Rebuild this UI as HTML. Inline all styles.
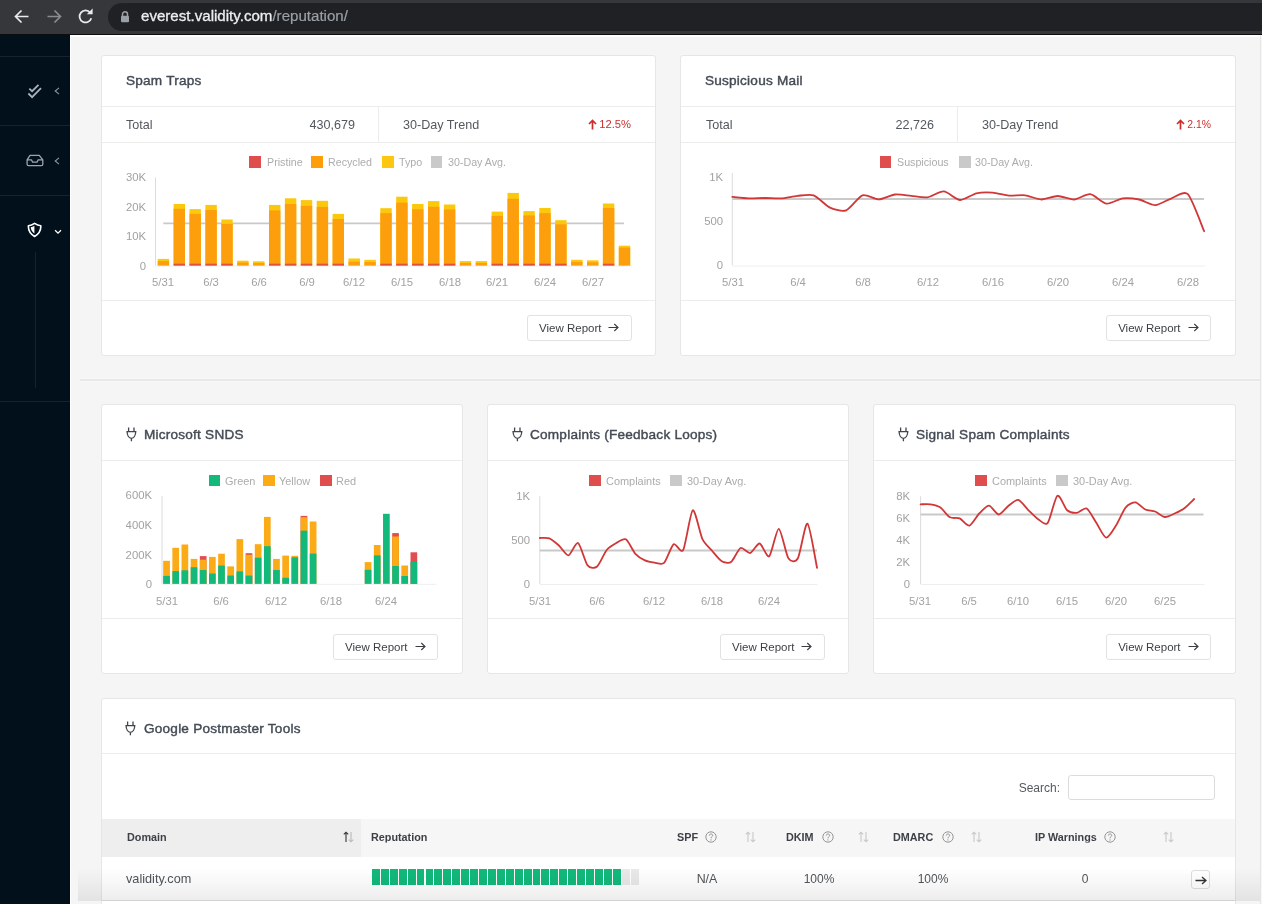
<!DOCTYPE html><html><head><meta charset="utf-8"><style>
html,body{margin:0;padding:0;}
body{width:1262px;height:904px;overflow:hidden;position:relative;background:#f5f5f5;font-family:"Liberation Sans", sans-serif;}
.abs{position:absolute;}
.t{position:absolute;white-space:nowrap;line-height:1;transform:translateY(-50%);will-change:transform;}
.t.e{transform:translate(-100%,-50%);}
.t.c{transform:translate(-50%,-50%);}
.card{position:absolute;background:#fff;border:1px solid #e6e6e6;border-radius:3px;box-sizing:border-box;}
.btn{position:absolute;will-change:transform;box-sizing:border-box;border:1px solid #e2e2e2;border-radius:3px;background:#fff;display:flex;align-items:center;justify-content:center;font-size:11.5px;color:#3b3f45;}
</style></head><body>
<div class="abs" style="left:0;top:0;width:1262px;height:34px;background:#36373b"></div>
<div class="abs" style="left:0;top:34px;width:1262px;height:1px;background:#0d0d0e"></div>
<div class="abs" style="left:108px;top:3px;width:1200px;height:27.5px;background:#202124;border-radius:14px"></div>
<svg class="abs" style="left:14px;top:9px" width="16" height="15" viewBox="0 0 16 15"><path d="M14.5 7.5H2M7.5 1.5L1.5 7.5L7.5 13.5" fill="none" stroke="#e8eaed" stroke-width="1.7"/></svg>
<svg class="abs" style="left:46px;top:9px" width="16" height="15" viewBox="0 0 16 15"><path d="M1.5 7.5H14M8.5 1.5L14.5 7.5L8.5 13.5" fill="none" stroke="#8b8c8f" stroke-width="1.7"/></svg>
<svg class="abs" style="left:77px;top:8px" width="18" height="17" viewBox="0 0 18 17"><path d="M14.3 10.2A6 6 0 1 1 13.2 4.6" fill="none" stroke="#e8eaed" stroke-width="1.8"/><path d="M9.8 6.2H15.6V0.6Z" fill="#e8eaed"/></svg>
<svg class="abs" style="left:120px;top:10px" width="10" height="13" viewBox="0 0 10 13"><path d="M2.5 6V4.2A2.5 2.5 0 0 1 7.5 4.2V6" fill="none" stroke="#9aa0a6" stroke-width="1.5"/><rect x="1" y="5.8" width="8" height="6.4" rx="1" fill="#9aa0a6"/></svg>
<div class="t" style="left:141.2px;top:15.9px;font-size:15.1px;color:#e8eaed;font-weight:400;"><span style="color:#eceef0;-webkit-text-stroke:0.3px #eceef0">everest.validity.com</span><span style="color:#9aa0a6;-webkit-text-stroke:0.2px #9aa0a6">/reputation/</span></div>
<div class="abs" style="left:0;top:35px;width:69.7px;height:869px;background:#02101b"></div>
<div class="abs" style="left:0px;top:55.5px;width:69.7px;height:1px;background:#17222d"></div>
<div class="abs" style="left:0px;top:125px;width:69.7px;height:1px;background:#17222d"></div>
<div class="abs" style="left:0px;top:194.5px;width:69.7px;height:1px;background:#17222d"></div>
<div class="abs" style="left:0px;top:401px;width:69.7px;height:1px;background:#17222d"></div>
<div class="abs" style="left:34.5px;top:252px;width:1px;height:136px;background:#17222d"></div>
<div class="abs" style="left:69.7px;top:35px;width:1.6px;height:869px;background:#ffffff"></div>
<div class="abs" style="left:69.7px;top:35px;width:1192.3px;height:1.6px;background:#ffffff"></div>
<svg class="abs" style="left:26px;top:83px" width="17" height="16" viewBox="0 0 17 16"><path d="M3.3 5.7L6.1 8.2L12.5 1.8M2.4 10.5L6.1 14.2L15 5.2" fill="none" stroke="#a9b2bb" stroke-width="1.8"/></svg>
<svg class="abs" style="left:54px;top:87px" width="6" height="8" viewBox="0 0 6 8"><path d="M5 0.8L1.2 4L5 7.2" fill="none" stroke="#8f969e" stroke-width="1.1"/></svg>
<svg class="abs" style="left:26px;top:154px" width="18" height="13" viewBox="0 0 18 13"><path d="M1.1 5.8L4 1.3H13.3L16.8 5.8V10.2Q16.8 11.7 15.3 11.7H2.6Q1.1 11.7 1.1 10.2Z M1.1 5.8H5.4L6.6 8.1H11L12.2 5.8H16.8" fill="none" stroke="#9ba5ae" stroke-width="1.3" stroke-linejoin="round"/></svg>
<svg class="abs" style="left:54px;top:156.5px" width="6" height="8" viewBox="0 0 6 8"><path d="M5 0.8L1.2 4L5 7.2" fill="none" stroke="#8f969e" stroke-width="1.1"/></svg>
<svg class="abs" style="left:27px;top:222px" width="15" height="16" viewBox="0 0 15 16"><path d="M7.6 1.3Q4.5 3.5 1.4 3.7Q1 10.5 7.6 14.5Q14.2 10.5 13.8 3.7Q10.7 3.5 7.6 1.3Z" fill="none" stroke="#ffffff" stroke-width="1.6" stroke-linejoin="round"/><path d="M7.4 3.7V11.6Q4.1 9.3 3.7 5.3Q5.8 4.9 7.4 3.7Z" fill="#ffffff"/></svg>
<svg class="abs" style="left:54px;top:229px" width="8" height="6" viewBox="0 0 8 6"><path d="M1.1 1.2L4 4.1L7 1.2" fill="none" stroke="#ffffff" stroke-width="1.3"/></svg>
<div class="abs" style="left:1260px;top:35px;width:1px;height:869px;background:#e6e6e6"></div>
<div class="abs" style="left:1261px;top:36px;width:1px;height:868px;background:#f7f7f7"></div>
<div class="card" style="left:101px;top:55px;width:555px;height:301px"></div>
<div class="card" style="left:680px;top:55px;width:556px;height:301px"></div>
<div class="abs" style="left:80px;top:377.6px;width:1180px;height:1px;background:#f9f9f9"></div>
<div class="abs" style="left:80px;top:379.1px;width:1180px;height:1.6px;background:#e8e8e8"></div>
<div class="abs" style="left:80px;top:380.7px;width:1180px;height:1.2px;background:#f8f8f8"></div>
<div class="card" style="left:101px;top:404px;width:362px;height:270px"></div>
<div class="card" style="left:487px;top:404px;width:362px;height:270px"></div>
<div class="card" style="left:873px;top:404px;width:363px;height:270px"></div>
<div class="card" style="left:101px;top:698px;width:1135px;height:230px"></div>
<div class="t" style="left:125.7px;top:81.3px;font-size:13.6px;color:#444b55;font-weight:400;letter-spacing:0.22px;-webkit-text-stroke:0.42px #444b55">Spam Traps</div>
<div class="abs" style="left:102px;top:106px;width:553px;height:1px;background:#ececec"></div>
<div class="abs" style="left:102px;top:142px;width:553px;height:1px;background:#ececec"></div>
<div class="abs" style="left:378px;top:106px;width:1px;height:36px;background:#ececec"></div>
<div class="t" style="left:125.8px;top:125px;font-size:12.6px;color:#53585e;font-weight:400;">Total</div>
<div class="t e" style="left:354.7px;top:125px;font-size:12.6px;color:#53585e;font-weight:400;">430,679</div>
<div class="t" style="left:402.6px;top:125px;font-size:12.6px;color:#53585e;font-weight:400;">30-Day Trend</div>
<div class="t e" style="left:631.2px;top:124.5px;font-size:11.2px;color:#c9302c;font-weight:400;">12.5%</div>
<svg class="abs" style="left:588px;top:119px" width="9" height="11" viewBox="0 0 9 11"><path d="M4.5 10.5V1.6M1 5L4.5 1.4L8 5" fill="none" stroke="#c9302c" stroke-width="1.7"/></svg>
<div class="abs" style="left:249.3px;top:156.45px;width:11.7px;height:11.7px;background:#df4d4d"></div>
<div class="t" style="left:266.6px;top:162.3px;font-size:10.7px;color:#acacac;font-weight:400;">Pristine</div>
<div class="abs" style="left:311px;top:156.45px;width:11.7px;height:11.7px;background:#fd9f0d"></div>
<div class="t" style="left:328px;top:162.3px;font-size:10.7px;color:#acacac;font-weight:400;">Recycled</div>
<div class="abs" style="left:382px;top:156.45px;width:11.7px;height:11.7px;background:#fdc70f"></div>
<div class="t" style="left:398.6px;top:162.3px;font-size:10.7px;color:#acacac;font-weight:400;">Typo</div>
<div class="abs" style="left:430.8px;top:156.45px;width:11.7px;height:11.7px;background:#c9c9c9"></div>
<div class="t" style="left:447.5px;top:162.3px;font-size:10.7px;color:#acacac;font-weight:400;">30-Day Avg.</div>
<div class="t e" style="left:145.5px;top:178.4px;font-size:11.3px;color:#a2a2a2;font-weight:400;">30K</div>
<div class="t e" style="left:145.5px;top:207.8px;font-size:11.3px;color:#a2a2a2;font-weight:400;">20K</div>
<div class="t e" style="left:145.5px;top:237.2px;font-size:11.3px;color:#a2a2a2;font-weight:400;">10K</div>
<div class="t e" style="left:145.5px;top:266.6px;font-size:11.3px;color:#a2a2a2;font-weight:400;">0</div>
<div class="t c" style="left:163.4px;top:283.2px;font-size:11.3px;color:#a2a2a2;font-weight:400;">5/31</div>
<div class="t c" style="left:211.1px;top:283.2px;font-size:11.3px;color:#a2a2a2;font-weight:400;">6/3</div>
<div class="t c" style="left:258.8px;top:283.2px;font-size:11.3px;color:#a2a2a2;font-weight:400;">6/6</div>
<div class="t c" style="left:306.5px;top:283.2px;font-size:11.3px;color:#a2a2a2;font-weight:400;">6/9</div>
<div class="t c" style="left:354.2px;top:283.2px;font-size:11.3px;color:#a2a2a2;font-weight:400;">6/12</div>
<div class="t c" style="left:401.9px;top:283.2px;font-size:11.3px;color:#a2a2a2;font-weight:400;">6/15</div>
<div class="t c" style="left:449.6px;top:283.2px;font-size:11.3px;color:#a2a2a2;font-weight:400;">6/18</div>
<div class="t c" style="left:497.3px;top:283.2px;font-size:11.3px;color:#a2a2a2;font-weight:400;">6/21</div>
<div class="t c" style="left:545px;top:283.2px;font-size:11.3px;color:#a2a2a2;font-weight:400;">6/24</div>
<div class="t c" style="left:592.7px;top:283.2px;font-size:11.3px;color:#a2a2a2;font-weight:400;">6/27</div>
<div class="abs" style="left:102px;top:300px;width:553px;height:1px;background:#ececec"></div>
<div class="btn" style="left:526.5px;top:315.4px;width:104.5px;height:25.9px"><span>View Report</span><svg width="11" height="9" viewBox="0 0 11 9" style="margin-left:7px"><path d="M0.5 4.5H10M6.3 1L10 4.5L6.3 8" fill="none" stroke="#3a3d42" stroke-width="1.15"/></svg></div>
<div class="t" style="left:704.9px;top:81.3px;font-size:13.6px;color:#444b55;font-weight:400;letter-spacing:0.22px;-webkit-text-stroke:0.42px #444b55">Suspicious Mail</div>
<div class="abs" style="left:681px;top:106px;width:554px;height:1px;background:#ececec"></div>
<div class="abs" style="left:681px;top:142px;width:554px;height:1px;background:#ececec"></div>
<div class="abs" style="left:957px;top:106px;width:1px;height:36px;background:#ececec"></div>
<div class="t" style="left:705.6px;top:125px;font-size:12.6px;color:#53585e;font-weight:400;">Total</div>
<div class="t e" style="left:934.1px;top:125px;font-size:12.6px;color:#53585e;font-weight:400;">22,726</div>
<div class="t" style="left:981.6px;top:125px;font-size:12.6px;color:#53585e;font-weight:400;">30-Day Trend</div>
<div class="t e" style="left:1210.9px;top:124.5px;font-size:10.4px;color:#c9302c;font-weight:400;">2.1%</div>
<svg class="abs" style="left:1175.5px;top:119px" width="9" height="11" viewBox="0 0 9 11"><path d="M4.5 10.5V1.6M1 5L4.5 1.4L8 5" fill="none" stroke="#c9302c" stroke-width="1.7"/></svg>
<div class="abs" style="left:879.7px;top:156.45px;width:11.7px;height:11.7px;background:#df4d4d"></div>
<div class="t" style="left:896.6px;top:162.3px;font-size:10.7px;color:#acacac;font-weight:400;">Suspicious</div>
<div class="abs" style="left:959px;top:156.45px;width:11.7px;height:11.7px;background:#c9c9c9"></div>
<div class="t" style="left:975.4px;top:162.3px;font-size:10.7px;color:#acacac;font-weight:400;">30-Day Avg.</div>
<div class="t e" style="left:722.5px;top:178.1px;font-size:11.3px;color:#a2a2a2;font-weight:400;">1K</div>
<div class="t e" style="left:722.5px;top:222.1px;font-size:11.3px;color:#a2a2a2;font-weight:400;">500</div>
<div class="t e" style="left:722.5px;top:266.1px;font-size:11.3px;color:#a2a2a2;font-weight:400;">0</div>
<div class="t c" style="left:732.5px;top:283.2px;font-size:11.3px;color:#a2a2a2;font-weight:400;">5/31</div>
<div class="t c" style="left:797.58px;top:283.2px;font-size:11.3px;color:#a2a2a2;font-weight:400;">6/4</div>
<div class="t c" style="left:862.66px;top:283.2px;font-size:11.3px;color:#a2a2a2;font-weight:400;">6/8</div>
<div class="t c" style="left:927.74px;top:283.2px;font-size:11.3px;color:#a2a2a2;font-weight:400;">6/12</div>
<div class="t c" style="left:992.82px;top:283.2px;font-size:11.3px;color:#a2a2a2;font-weight:400;">6/16</div>
<div class="t c" style="left:1057.9px;top:283.2px;font-size:11.3px;color:#a2a2a2;font-weight:400;">6/20</div>
<div class="t c" style="left:1122.98px;top:283.2px;font-size:11.3px;color:#a2a2a2;font-weight:400;">6/24</div>
<div class="t c" style="left:1188.06px;top:283.2px;font-size:11.3px;color:#a2a2a2;font-weight:400;">6/28</div>
<div class="abs" style="left:681px;top:300px;width:554px;height:1px;background:#ececec"></div>
<div class="btn" style="left:1106.2px;top:315.4px;width:104.7px;height:25.9px"><span>View Report</span><svg width="11" height="9" viewBox="0 0 11 9" style="margin-left:7px"><path d="M0.5 4.5H10M6.3 1L10 4.5L6.3 8" fill="none" stroke="#3a3d42" stroke-width="1.15"/></svg></div>
<svg class="abs" style="left:125.5px;top:426.5px" width="12" height="15" viewBox="0 0 12 15"><path d="M2.6 0.6V4.2M8 0.6V4.2M0.4 4.7H10.4M1.1 4.7C1.1 8.4 3.1 11 5.4 11.3C7.7 11 9.7 8.4 9.7 4.7M5.4 11.3V14.3" fill="none" stroke="#3f454d" stroke-width="1.3"/></svg>
<div class="t" style="left:144.3px;top:435.2px;font-size:13.6px;color:#444b55;font-weight:400;letter-spacing:0.22px;-webkit-text-stroke:0.42px #444b55">Microsoft SNDS</div>
<div class="abs" style="left:102px;top:460px;width:360px;height:1px;background:#ececec"></div>
<div class="abs" style="left:208.5px;top:474.7px;width:11.8px;height:11.8px;background:#12b97b"></div>
<div class="t" style="left:224.6px;top:480.5px;font-size:10.95px;color:#acacac;font-weight:400;">Green</div>
<div class="abs" style="left:263.3px;top:474.7px;width:11.8px;height:11.8px;background:#fbab16"></div>
<div class="t" style="left:279.4px;top:480.5px;font-size:10.95px;color:#acacac;font-weight:400;">Yellow</div>
<div class="abs" style="left:319.9px;top:474.7px;width:11.8px;height:11.8px;background:#df4d4d"></div>
<div class="t" style="left:336.3px;top:480.5px;font-size:10.95px;color:#acacac;font-weight:400;">Red</div>
<div class="t e" style="left:151.7px;top:496.4px;font-size:11.3px;color:#a2a2a2;font-weight:400;">600K</div>
<div class="t e" style="left:151.7px;top:526.2px;font-size:11.3px;color:#a2a2a2;font-weight:400;">400K</div>
<div class="t e" style="left:151.7px;top:555.8px;font-size:11.3px;color:#a2a2a2;font-weight:400;">200K</div>
<div class="t e" style="left:151.7px;top:585.2px;font-size:11.3px;color:#a2a2a2;font-weight:400;">0</div>
<div class="t c" style="left:166.5px;top:601.6px;font-size:11.3px;color:#a2a2a2;font-weight:400;">5/31</div>
<div class="t c" style="left:221.46px;top:601.6px;font-size:11.3px;color:#a2a2a2;font-weight:400;">6/6</div>
<div class="t c" style="left:276.42px;top:601.6px;font-size:11.3px;color:#a2a2a2;font-weight:400;">6/12</div>
<div class="t c" style="left:331.38px;top:601.6px;font-size:11.3px;color:#a2a2a2;font-weight:400;">6/18</div>
<div class="t c" style="left:386.34px;top:601.6px;font-size:11.3px;color:#a2a2a2;font-weight:400;">6/24</div>
<div class="abs" style="left:102px;top:618px;width:360px;height:1px;background:#ececec"></div>
<div class="btn" style="left:333.3px;top:633.6px;width:104.6px;height:25.8px"><span>View Report</span><svg width="11" height="9" viewBox="0 0 11 9" style="margin-left:7px"><path d="M0.5 4.5H10M6.3 1L10 4.5L6.3 8" fill="none" stroke="#3a3d42" stroke-width="1.15"/></svg></div>
<svg class="abs" style="left:511.8px;top:426.5px" width="12" height="15" viewBox="0 0 12 15"><path d="M2.6 0.6V4.2M8 0.6V4.2M0.4 4.7H10.4M1.1 4.7C1.1 8.4 3.1 11 5.4 11.3C7.7 11 9.7 8.4 9.7 4.7M5.4 11.3V14.3" fill="none" stroke="#3f454d" stroke-width="1.3"/></svg>
<div class="t" style="left:530.2px;top:435.2px;font-size:13.6px;color:#444b55;font-weight:400;letter-spacing:0.22px;-webkit-text-stroke:0.42px #444b55">Complaints (Feedback Loops)</div>
<div class="abs" style="left:488px;top:460px;width:360px;height:1px;background:#ececec"></div>
<div class="abs" style="left:589.1px;top:474.7px;width:11.8px;height:11.8px;background:#df4d4d"></div>
<div class="t" style="left:605.7px;top:480.5px;font-size:10.95px;color:#acacac;font-weight:400;">Complaints</div>
<div class="abs" style="left:670px;top:474.7px;width:11.8px;height:11.8px;background:#c9c9c9"></div>
<div class="t" style="left:686.5px;top:480.5px;font-size:10.95px;color:#acacac;font-weight:400;">30-Day Avg.</div>
<div class="t e" style="left:529.9px;top:496.6px;font-size:11.3px;color:#a2a2a2;font-weight:400;">1K</div>
<div class="t e" style="left:529.9px;top:540.8px;font-size:11.3px;color:#a2a2a2;font-weight:400;">500</div>
<div class="t e" style="left:529.9px;top:585px;font-size:11.3px;color:#a2a2a2;font-weight:400;">0</div>
<div class="t c" style="left:539.6px;top:601.6px;font-size:11.3px;color:#a2a2a2;font-weight:400;">5/31</div>
<div class="t c" style="left:597px;top:601.6px;font-size:11.3px;color:#a2a2a2;font-weight:400;">6/6</div>
<div class="t c" style="left:654.4px;top:601.6px;font-size:11.3px;color:#a2a2a2;font-weight:400;">6/12</div>
<div class="t c" style="left:711.8px;top:601.6px;font-size:11.3px;color:#a2a2a2;font-weight:400;">6/18</div>
<div class="t c" style="left:769.2px;top:601.6px;font-size:11.3px;color:#a2a2a2;font-weight:400;">6/24</div>
<div class="abs" style="left:488px;top:618px;width:360px;height:1px;background:#ececec"></div>
<div class="btn" style="left:720px;top:633.6px;width:104.5px;height:25.8px"><span>View Report</span><svg width="11" height="9" viewBox="0 0 11 9" style="margin-left:7px"><path d="M0.5 4.5H10M6.3 1L10 4.5L6.3 8" fill="none" stroke="#3a3d42" stroke-width="1.15"/></svg></div>
<svg class="abs" style="left:897.8px;top:426.5px" width="12" height="15" viewBox="0 0 12 15"><path d="M2.6 0.6V4.2M8 0.6V4.2M0.4 4.7H10.4M1.1 4.7C1.1 8.4 3.1 11 5.4 11.3C7.7 11 9.7 8.4 9.7 4.7M5.4 11.3V14.3" fill="none" stroke="#3f454d" stroke-width="1.3"/></svg>
<div class="t" style="left:916.4px;top:435.2px;font-size:13.6px;color:#444b55;font-weight:400;letter-spacing:0.22px;-webkit-text-stroke:0.42px #444b55">Signal Spam Complaints</div>
<div class="abs" style="left:874px;top:460px;width:361px;height:1px;background:#ececec"></div>
<div class="abs" style="left:975px;top:474.7px;width:11.8px;height:11.8px;background:#df4d4d"></div>
<div class="t" style="left:991.6px;top:480.5px;font-size:10.95px;color:#acacac;font-weight:400;">Complaints</div>
<div class="abs" style="left:1056px;top:474.7px;width:11.8px;height:11.8px;background:#c9c9c9"></div>
<div class="t" style="left:1072.7px;top:480.5px;font-size:10.95px;color:#acacac;font-weight:400;">30-Day Avg.</div>
<div class="t e" style="left:910.4px;top:496.8px;font-size:11.3px;color:#a2a2a2;font-weight:400;">8K</div>
<div class="t e" style="left:910.4px;top:518.9px;font-size:11.3px;color:#a2a2a2;font-weight:400;">6K</div>
<div class="t e" style="left:910.4px;top:540.8px;font-size:11.3px;color:#a2a2a2;font-weight:400;">4K</div>
<div class="t e" style="left:910.4px;top:562.8px;font-size:11.3px;color:#a2a2a2;font-weight:400;">2K</div>
<div class="t e" style="left:910.4px;top:585px;font-size:11.3px;color:#a2a2a2;font-weight:400;">0</div>
<div class="t c" style="left:919.9px;top:601.6px;font-size:11.3px;color:#a2a2a2;font-weight:400;">5/31</div>
<div class="t c" style="left:968.9px;top:601.6px;font-size:11.3px;color:#a2a2a2;font-weight:400;">6/5</div>
<div class="t c" style="left:1017.9px;top:601.6px;font-size:11.3px;color:#a2a2a2;font-weight:400;">6/10</div>
<div class="t c" style="left:1066.9px;top:601.6px;font-size:11.3px;color:#a2a2a2;font-weight:400;">6/15</div>
<div class="t c" style="left:1115.9px;top:601.6px;font-size:11.3px;color:#a2a2a2;font-weight:400;">6/20</div>
<div class="t c" style="left:1164.9px;top:601.6px;font-size:11.3px;color:#a2a2a2;font-weight:400;">6/25</div>
<div class="abs" style="left:874px;top:618px;width:361px;height:1px;background:#ececec"></div>
<div class="btn" style="left:1106.2px;top:633.6px;width:104.7px;height:25.8px"><span>View Report</span><svg width="11" height="9" viewBox="0 0 11 9" style="margin-left:7px"><path d="M0.5 4.5H10M6.3 1L10 4.5L6.3 8" fill="none" stroke="#3a3d42" stroke-width="1.15"/></svg></div>
<svg class="abs" style="left:0;top:0" width="1262" height="904" viewBox="0 0 1262 904"><line x1="155.5" y1="177.5" x2="155.5" y2="265.5" stroke="#dcdcdc" stroke-width="1"/><line x1="155.5" y1="266.0" x2="632" y2="266.0" stroke="#eeeeee" stroke-width="1"/><line x1="163.3" y1="223.4" x2="624" y2="223.4" stroke="#c9c9c9" stroke-width="1.8"/><rect x="157.7" y="258.9" width="11.4" height="6.6" fill="#fbc80b"/><rect x="157.7" y="261.1" width="11.4" height="4.4" fill="#fd9f0d"/><rect x="173.6" y="204" width="11.4" height="61.5" fill="#fbc80b"/><rect x="173.6" y="208.8" width="11.4" height="56.7" fill="#fd9f0d"/><rect x="173.6" y="263.7" width="11.4" height="1.8" fill="#e2503c"/><rect x="189.5" y="209.1" width="11.4" height="56.4" fill="#fbc80b"/><rect x="189.5" y="213.9" width="11.4" height="51.6" fill="#fd9f0d"/><rect x="189.5" y="263.7" width="11.4" height="1.8" fill="#e2503c"/><rect x="205.4" y="204.9" width="11.4" height="60.6" fill="#fbc80b"/><rect x="205.4" y="210" width="11.4" height="55.5" fill="#fd9f0d"/><rect x="205.4" y="263.7" width="11.4" height="1.8" fill="#e2503c"/><rect x="221.3" y="219.5" width="11.4" height="46" fill="#fbc80b"/><rect x="221.3" y="223.9" width="11.4" height="41.6" fill="#fd9f0d"/><rect x="221.3" y="263.7" width="11.4" height="1.8" fill="#e2503c"/><rect x="237.2" y="260.7" width="11.4" height="4.8" fill="#fbc80b"/><rect x="237.2" y="262.6" width="11.4" height="2.9" fill="#fd9f0d"/><rect x="253.1" y="261.3" width="11.4" height="4.2" fill="#fbc80b"/><rect x="253.1" y="263" width="11.4" height="2.5" fill="#fd9f0d"/><rect x="269" y="204.9" width="11.4" height="60.6" fill="#fbc80b"/><rect x="269" y="210.4" width="11.4" height="55.1" fill="#fd9f0d"/><rect x="269" y="263.7" width="11.4" height="1.8" fill="#e2503c"/><rect x="284.9" y="198.3" width="11.4" height="67.2" fill="#fbc80b"/><rect x="284.9" y="204" width="11.4" height="61.5" fill="#fd9f0d"/><rect x="284.9" y="263.7" width="11.4" height="1.8" fill="#e2503c"/><rect x="300.8" y="200.1" width="11.4" height="65.4" fill="#fbc80b"/><rect x="300.8" y="205.9" width="11.4" height="59.6" fill="#fd9f0d"/><rect x="300.8" y="263.7" width="11.4" height="1.8" fill="#e2503c"/><rect x="316.7" y="200.8" width="11.4" height="64.7" fill="#fbc80b"/><rect x="316.7" y="206.9" width="11.4" height="58.6" fill="#fd9f0d"/><rect x="316.7" y="263.7" width="11.4" height="1.8" fill="#e2503c"/><rect x="332.6" y="213.9" width="11.4" height="51.6" fill="#fbc80b"/><rect x="332.6" y="219" width="11.4" height="46.5" fill="#fd9f0d"/><rect x="332.6" y="263.7" width="11.4" height="1.8" fill="#e2503c"/><rect x="348.5" y="258.5" width="11.4" height="7" fill="#fbc80b"/><rect x="348.5" y="261.7" width="11.4" height="3.8" fill="#fd9f0d"/><rect x="364.4" y="259.8" width="11.4" height="5.7" fill="#fbc80b"/><rect x="364.4" y="262" width="11.4" height="3.5" fill="#fd9f0d"/><rect x="380.3" y="208.2" width="11.4" height="57.3" fill="#fbc80b"/><rect x="380.3" y="213.1" width="11.4" height="52.4" fill="#fd9f0d"/><rect x="380.3" y="263.7" width="11.4" height="1.8" fill="#e2503c"/><rect x="396.2" y="196.7" width="11.4" height="68.8" fill="#fbc80b"/><rect x="396.2" y="202.7" width="11.4" height="62.8" fill="#fd9f0d"/><rect x="396.2" y="263.7" width="11.4" height="1.8" fill="#e2503c"/><rect x="412.1" y="204" width="11.4" height="61.5" fill="#fbc80b"/><rect x="412.1" y="209.3" width="11.4" height="56.2" fill="#fd9f0d"/><rect x="412.1" y="263.7" width="11.4" height="1.8" fill="#e2503c"/><rect x="428" y="201.1" width="11.4" height="64.4" fill="#fbc80b"/><rect x="428" y="206.8" width="11.4" height="58.7" fill="#fd9f0d"/><rect x="428" y="263.7" width="11.4" height="1.8" fill="#e2503c"/><rect x="443.9" y="204.5" width="11.4" height="61" fill="#fbc80b"/><rect x="443.9" y="209.4" width="11.4" height="56.1" fill="#fd9f0d"/><rect x="443.9" y="263.7" width="11.4" height="1.8" fill="#e2503c"/><rect x="459.8" y="261.1" width="11.4" height="4.4" fill="#fbc80b"/><rect x="459.8" y="263" width="11.4" height="2.5" fill="#fd9f0d"/><rect x="475.7" y="261.1" width="11.4" height="4.4" fill="#fbc80b"/><rect x="475.7" y="263" width="11.4" height="2.5" fill="#fd9f0d"/><rect x="491.6" y="211.6" width="11.4" height="53.9" fill="#fbc80b"/><rect x="491.6" y="215.9" width="11.4" height="49.6" fill="#fd9f0d"/><rect x="491.6" y="263.7" width="11.4" height="1.8" fill="#e2503c"/><rect x="507.5" y="192.9" width="11.4" height="72.6" fill="#fbc80b"/><rect x="507.5" y="198.8" width="11.4" height="66.7" fill="#fd9f0d"/><rect x="507.5" y="263.7" width="11.4" height="1.8" fill="#e2503c"/><rect x="523.4" y="211.1" width="11.4" height="54.4" fill="#fbc80b"/><rect x="523.4" y="215.4" width="11.4" height="50.1" fill="#fd9f0d"/><rect x="523.4" y="263.7" width="11.4" height="1.8" fill="#e2503c"/><rect x="539.3" y="208" width="11.4" height="57.5" fill="#fbc80b"/><rect x="539.3" y="213.2" width="11.4" height="52.3" fill="#fd9f0d"/><rect x="539.3" y="263.7" width="11.4" height="1.8" fill="#e2503c"/><rect x="555.2" y="220.2" width="11.4" height="45.3" fill="#fbc80b"/><rect x="555.2" y="224.3" width="11.4" height="41.2" fill="#fd9f0d"/><rect x="555.2" y="263.7" width="11.4" height="1.8" fill="#e2503c"/><rect x="571.1" y="259.8" width="11.4" height="5.7" fill="#fbc80b"/><rect x="571.1" y="262" width="11.4" height="3.5" fill="#fd9f0d"/><rect x="587" y="260.3" width="11.4" height="5.2" fill="#fbc80b"/><rect x="587" y="262.3" width="11.4" height="3.2" fill="#fd9f0d"/><rect x="602.9" y="203.5" width="11.4" height="62" fill="#fbc80b"/><rect x="602.9" y="208" width="11.4" height="57.5" fill="#fd9f0d"/><rect x="602.9" y="263.7" width="11.4" height="1.8" fill="#e2503c"/><rect x="618.8" y="245.7" width="11.4" height="19.8" fill="#fbc80b"/><rect x="618.8" y="247.6" width="11.4" height="17.9" fill="#fd9f0d"/><line x1="732.3" y1="173" x2="732.3" y2="265.5" stroke="#dcdcdc" stroke-width="1"/><line x1="732.3" y1="266.0" x2="1205" y2="266.0" stroke="#eeeeee" stroke-width="1"/><line x1="732.3" y1="199" x2="1204" y2="199" stroke="#c9c9c9" stroke-width="1.8"/><path d="M732.3 196.9 C734.33 197.09 744.5 198.26 748.57 198.4 C752.64 198.54 760.77 198 764.84 198 C768.91 198 777.04 198.66 781.11 198.4 C785.18 198.14 793.31 196.29 797.38 195.9 C801.45 195.51 809.58 193.84 813.65 195.3 C817.72 196.76 825.85 205.72 829.92 207.6 C833.99 209.47 842.12 211.84 846.19 210.3 C850.26 208.76 858.39 196.66 862.46 195.3 C866.53 193.94 874.66 199.5 878.73 199.4 C882.8 199.3 890.93 194.94 895 194.5 C899.07 194.06 907.2 195.55 911.27 195.9 C915.34 196.25 923.47 197.86 927.54 197.3 C931.61 196.74 939.74 191.06 943.81 191.4 C947.88 191.74 956.01 199.76 960.08 200 C964.15 200.24 972.28 194.23 976.35 193.3 C980.42 192.38 988.55 192.31 992.62 192.6 C996.69 192.89 1004.82 195.26 1008.89 195.6 C1012.96 195.94 1021.09 194.81 1025.16 195.3 C1029.23 195.79 1037.36 199.41 1041.43 199.5 C1045.5 199.59 1053.63 196 1057.7 196 C1061.77 196 1069.9 199.72 1073.97 199.5 C1078.04 199.28 1086.17 193.69 1090.24 194.2 C1094.31 194.71 1102.44 203.09 1106.51 203.6 C1110.58 204.11 1118.71 198.81 1122.78 198.3 C1126.85 197.79 1134.98 198.64 1139.05 199.5 C1143.12 200.36 1151.25 205.35 1155.32 205.2 C1159.39 205.05 1167.52 199.68 1171.59 198.3 C1175.66 196.93 1183.79 190.09 1187.86 194.2 C1191.93 198.31 1202.1 226.57 1204.13 231.2" fill="none" stroke="#d13737" stroke-width="1.8" stroke-linejoin="round" stroke-linecap="round"/><line x1="162" y1="495.8" x2="162" y2="583.8" stroke="#dcdcdc" stroke-width="1"/><line x1="162" y1="584.3" x2="436.4" y2="584.3" stroke="#eeeeee" stroke-width="1"/><rect x="163.2" y="560.8" width="6.7" height="23" fill="#fbab16"/><rect x="163.2" y="575.9" width="6.7" height="7.9" fill="#12b97b"/><rect x="172.36" y="547.8" width="6.7" height="36" fill="#fbab16"/><rect x="172.36" y="571.1" width="6.7" height="12.7" fill="#12b97b"/><rect x="181.52" y="544.5" width="6.7" height="39.3" fill="#fbab16"/><rect x="181.52" y="570.3" width="6.7" height="13.5" fill="#12b97b"/><rect x="190.68" y="558.9" width="6.7" height="24.9" fill="#fbab16"/><rect x="190.68" y="567.2" width="6.7" height="16.6" fill="#12b97b"/><rect x="199.84" y="556.1" width="6.7" height="27.7" fill="#e04f4f"/><rect x="199.84" y="559.7" width="6.7" height="24.1" fill="#fbab16"/><rect x="199.84" y="570" width="6.7" height="13.8" fill="#12b97b"/><rect x="209" y="556.9" width="6.7" height="26.9" fill="#fbab16"/><rect x="209" y="573.5" width="6.7" height="10.3" fill="#12b97b"/><rect x="218.16" y="553.7" width="6.7" height="30.1" fill="#fbab16"/><rect x="218.16" y="565.6" width="6.7" height="18.2" fill="#12b97b"/><rect x="227.32" y="566.4" width="6.7" height="17.4" fill="#fbab16"/><rect x="227.32" y="575.6" width="6.7" height="8.2" fill="#12b97b"/><rect x="236.48" y="539.1" width="6.7" height="44.7" fill="#fbab16"/><rect x="236.48" y="571.4" width="6.7" height="12.4" fill="#12b97b"/><rect x="245.64" y="553.2" width="6.7" height="30.6" fill="#e04f4f"/><rect x="245.64" y="554.8" width="6.7" height="29" fill="#fbab16"/><rect x="245.64" y="575.6" width="6.7" height="8.2" fill="#12b97b"/><rect x="254.8" y="544.2" width="6.7" height="39.6" fill="#fbab16"/><rect x="254.8" y="557.7" width="6.7" height="26.1" fill="#12b97b"/><rect x="263.96" y="516.9" width="6.7" height="66.9" fill="#fbab16"/><rect x="263.96" y="546.2" width="6.7" height="37.6" fill="#12b97b"/><rect x="273.12" y="558.9" width="6.7" height="24.9" fill="#fbab16"/><rect x="273.12" y="570" width="6.7" height="13.8" fill="#12b97b"/><rect x="282.28" y="555.6" width="6.7" height="28.2" fill="#fbab16"/><rect x="282.28" y="577.8" width="6.7" height="6" fill="#12b97b"/><rect x="291.44" y="555.8" width="6.7" height="28" fill="#fbab16"/><rect x="291.44" y="557.3" width="6.7" height="26.5" fill="#12b97b"/><rect x="300.6" y="515.9" width="6.7" height="67.9" fill="#e04f4f"/><rect x="300.6" y="517.2" width="6.7" height="66.6" fill="#fbab16"/><rect x="300.6" y="530.7" width="6.7" height="53.1" fill="#12b97b"/><rect x="309.76" y="521.5" width="6.7" height="62.3" fill="#fbab16"/><rect x="309.76" y="553.6" width="6.7" height="30.2" fill="#12b97b"/><rect x="364.72" y="562.1" width="6.7" height="21.7" fill="#fbab16"/><rect x="364.72" y="569.8" width="6.7" height="14" fill="#12b97b"/><rect x="373.88" y="545" width="6.7" height="38.8" fill="#fbab16"/><rect x="373.88" y="555.4" width="6.7" height="28.4" fill="#12b97b"/><rect x="383.04" y="513.8" width="6.7" height="70" fill="#12b97b"/><rect x="392.2" y="533.1" width="6.7" height="50.7" fill="#e04f4f"/><rect x="392.2" y="536.5" width="6.7" height="47.3" fill="#fbab16"/><rect x="392.2" y="566" width="6.7" height="17.8" fill="#12b97b"/><rect x="401.36" y="565.5" width="6.7" height="18.3" fill="#fbab16"/><rect x="401.36" y="576" width="6.7" height="7.8" fill="#12b97b"/><rect x="410.52" y="552.3" width="6.7" height="31.5" fill="#e04f4f"/><rect x="410.52" y="561.6" width="6.7" height="22.2" fill="#12b97b"/><line x1="539.8" y1="496.2" x2="539.8" y2="584" stroke="#dcdcdc" stroke-width="1"/><line x1="539.8" y1="584.5" x2="817.6" y2="584.5" stroke="#eeeeee" stroke-width="1"/><line x1="539.8" y1="550.5" x2="817" y2="550.5" stroke="#c9c9c9" stroke-width="1.8"/><path d="M539.8 538 C540.99 538.04 546.97 537.36 549.36 538.3 C551.75 539.24 556.53 543.36 558.92 545.5 C561.31 547.64 566.09 555.71 568.48 555.4 C570.87 555.09 575.65 541.75 578.04 543 C580.43 544.25 585.21 562.46 587.6 565.4 C589.99 568.34 594.77 568.42 597.16 566.5 C599.55 564.58 604.33 552.94 606.72 550 C609.11 547.06 613.89 544.34 616.28 543 C618.67 541.66 623.45 537.95 625.84 539.3 C628.23 540.65 633.01 551.16 635.4 553.8 C637.79 556.44 642.57 559.3 644.96 560.4 C647.35 561.5 652.13 562.29 654.52 562.6 C656.91 562.91 661.69 565.2 664.08 562.9 C666.47 560.6 671.25 545.81 673.64 544.2 C676.03 542.59 680.81 554.24 683.2 550 C685.59 545.76 690.37 511.7 692.76 510.3 C695.15 508.9 699.93 533.77 702.32 538.8 C704.71 543.82 709.49 547.74 711.88 550.5 C714.27 553.26 719.05 559.45 721.44 560.9 C723.83 562.35 728.61 563.71 731 562.1 C733.39 560.49 738.17 549.14 740.56 548 C742.95 546.86 747.73 553.56 750.12 553 C752.51 552.44 757.29 543.09 759.68 543.5 C762.07 543.91 766.85 558.12 769.24 556.3 C771.63 554.47 776.41 528.65 778.8 528.9 C781.19 529.15 785.97 554.62 788.36 558.3 C790.75 561.97 795.53 562.64 797.92 558.3 C800.31 553.96 805.09 522.4 807.48 523.6 C809.87 524.8 815.85 562.36 817.04 567.9" fill="none" stroke="#d13737" stroke-width="1.8" stroke-linejoin="round" stroke-linecap="round"/><line x1="920.6" y1="496.2" x2="920.6" y2="584" stroke="#dcdcdc" stroke-width="1"/><line x1="920.6" y1="584.5" x2="1204.5" y2="584.5" stroke="#eeeeee" stroke-width="1"/><line x1="920.6" y1="514.5" x2="1203.5" y2="514.5" stroke="#c9c9c9" stroke-width="1.8"/><path d="M920.6 504.3 C921.82 504.3 927.93 503.93 930.37 504.3 C932.81 504.68 937.7 505.68 940.14 507.3 C942.58 508.93 947.47 515.91 949.91 517.3 C952.35 518.69 957.24 517.36 959.68 518.4 C962.12 519.44 967.01 526.21 969.45 525.6 C971.89 524.99 976.78 515.99 979.22 513.5 C981.66 511.01 986.55 505.57 988.99 505.7 C991.43 505.82 996.32 514.5 998.76 514.5 C1001.2 514.5 1006.09 507.52 1008.53 505.7 C1010.97 503.88 1015.86 499.39 1018.3 499.9 C1020.74 500.41 1025.63 507.43 1028.07 509.8 C1030.51 512.17 1035.4 517.24 1037.84 518.9 C1040.28 520.56 1045.17 526 1047.61 523.1 C1050.05 520.2 1054.94 497.3 1057.38 495.7 C1059.82 494.1 1064.71 508.16 1067.15 510.3 C1069.59 512.44 1074.48 513.02 1076.92 512.8 C1079.36 512.57 1084.25 507.21 1086.69 508.5 C1089.13 509.79 1094.02 519.45 1096.46 523.1 C1098.9 526.75 1103.79 537.39 1106.23 537.7 C1108.67 538.01 1113.56 529.4 1116 525.6 C1118.44 521.8 1123.33 510.21 1125.77 507.3 C1128.21 504.39 1133.1 502.03 1135.54 502.3 C1137.98 502.57 1142.87 508.35 1145.31 509.5 C1147.75 510.65 1152.64 510.56 1155.08 511.5 C1157.52 512.44 1162.41 516.75 1164.85 517 C1167.29 517.25 1172.18 514.6 1174.62 513.5 C1177.06 512.4 1181.95 510.01 1184.39 508.2 C1186.83 506.39 1192.94 500.15 1194.16 499" fill="none" stroke="#d13737" stroke-width="1.8" stroke-linejoin="round" stroke-linecap="round"/></svg>
<svg class="abs" style="left:125.2px;top:720.5px" width="12" height="15" viewBox="0 0 12 15"><path d="M2.6 0.6V4.2M8 0.6V4.2M0.4 4.7H10.4M1.1 4.7C1.1 8.4 3.1 11 5.4 11.3C7.7 11 9.7 8.4 9.7 4.7M5.4 11.3V14.3" fill="none" stroke="#3f454d" stroke-width="1.3"/></svg>
<div class="t" style="left:144.1px;top:729px;font-size:13.6px;color:#444b55;font-weight:400;letter-spacing:0.22px;-webkit-text-stroke:0.42px #444b55">Google Postmaster Tools</div>
<div class="abs" style="left:102px;top:753px;width:1133px;height:1px;background:#ececec"></div>
<div class="t e" style="left:1060.2px;top:788px;font-size:12px;color:#555a60;font-weight:400;">Search:</div>
<div class="abs" style="left:1067.5px;top:774.5px;width:147.4px;height:25.4px;box-sizing:border-box;border:1px solid #dcdcdc;border-radius:3px;background:#fff"></div>
<div class="abs" style="left:102px;top:819px;width:1133px;height:38px;background:#f6f6f6"></div>
<div class="abs" style="left:102px;top:819px;width:259.4px;height:38px;background:#eeeeee"></div>
<div class="t" style="left:126.7px;top:836.8px;font-size:10.8px;color:#3d4147;font-weight:700;">Domain</div>
<svg class="abs" style="left:342.8px;top:830.8px" width="11" height="12" viewBox="0 0 11 12"><path d="M3 11V1.2M0.8 3.4L3 1.2L5.2 3.4" fill="none" stroke="#333" stroke-width="1.1"/><path d="M8 1V10.8M5.8 8.6L8 10.8L10.2 8.6" fill="none" stroke="#bbb" stroke-width="1.1"/></svg>
<div class="t" style="left:371.4px;top:836.8px;font-size:10.8px;color:#3d4147;font-weight:700;">Reputation</div>
<div class="t" style="left:677px;top:836.8px;font-size:10.8px;color:#3d4147;font-weight:700;">SPF</div>
<svg class="abs" style="left:704.6px;top:831.3px" width="12" height="12" viewBox="0 0 12 12"><circle cx="6" cy="6" r="5.2" fill="none" stroke="#8a8a8a" stroke-width="0.9"/><path d="M4.3 4.6C4.3 3.6 5 3 6 3C7 3 7.7 3.6 7.7 4.5C7.7 5.6 6 5.7 6 7V7.3" fill="none" stroke="#8a8a8a" stroke-width="0.9"/><circle cx="6" cy="8.9" r="0.6" fill="#8a8a8a"/></svg>
<svg class="abs" style="left:745.2px;top:830.8px" width="11" height="12" viewBox="0 0 11 12"><path d="M3 11V1.2M0.8 3.4L3 1.2L5.2 3.4" fill="none" stroke="#c8c8c8" stroke-width="1.1"/><path d="M8 1V10.8M5.8 8.6L8 10.8L10.2 8.6" fill="none" stroke="#c8c8c8" stroke-width="1.1"/></svg>
<div class="t" style="left:786.1px;top:836.8px;font-size:10.8px;color:#3d4147;font-weight:700;">DKIM</div>
<svg class="abs" style="left:821.6px;top:831.3px" width="12" height="12" viewBox="0 0 12 12"><circle cx="6" cy="6" r="5.2" fill="none" stroke="#8a8a8a" stroke-width="0.9"/><path d="M4.3 4.6C4.3 3.6 5 3 6 3C7 3 7.7 3.6 7.7 4.5C7.7 5.6 6 5.7 6 7V7.3" fill="none" stroke="#8a8a8a" stroke-width="0.9"/><circle cx="6" cy="8.9" r="0.6" fill="#8a8a8a"/></svg>
<svg class="abs" style="left:858px;top:830.8px" width="11" height="12" viewBox="0 0 11 12"><path d="M3 11V1.2M0.8 3.4L3 1.2L5.2 3.4" fill="none" stroke="#c8c8c8" stroke-width="1.1"/><path d="M8 1V10.8M5.8 8.6L8 10.8L10.2 8.6" fill="none" stroke="#c8c8c8" stroke-width="1.1"/></svg>
<div class="t" style="left:893px;top:836.8px;font-size:10.8px;color:#3d4147;font-weight:700;">DMARC</div>
<svg class="abs" style="left:941.5px;top:831.3px" width="12" height="12" viewBox="0 0 12 12"><circle cx="6" cy="6" r="5.2" fill="none" stroke="#8a8a8a" stroke-width="0.9"/><path d="M4.3 4.6C4.3 3.6 5 3 6 3C7 3 7.7 3.6 7.7 4.5C7.7 5.6 6 5.7 6 7V7.3" fill="none" stroke="#8a8a8a" stroke-width="0.9"/><circle cx="6" cy="8.9" r="0.6" fill="#8a8a8a"/></svg>
<svg class="abs" style="left:971.2px;top:830.8px" width="11" height="12" viewBox="0 0 11 12"><path d="M3 11V1.2M0.8 3.4L3 1.2L5.2 3.4" fill="none" stroke="#c8c8c8" stroke-width="1.1"/><path d="M8 1V10.8M5.8 8.6L8 10.8L10.2 8.6" fill="none" stroke="#c8c8c8" stroke-width="1.1"/></svg>
<div class="t" style="left:1034.9px;top:836.8px;font-size:10.8px;color:#3d4147;font-weight:700;">IP Warnings</div>
<svg class="abs" style="left:1104px;top:831.3px" width="12" height="12" viewBox="0 0 12 12"><circle cx="6" cy="6" r="5.2" fill="none" stroke="#8a8a8a" stroke-width="0.9"/><path d="M4.3 4.6C4.3 3.6 5 3 6 3C7 3 7.7 3.6 7.7 4.5C7.7 5.6 6 5.7 6 7V7.3" fill="none" stroke="#8a8a8a" stroke-width="0.9"/><circle cx="6" cy="8.9" r="0.6" fill="#8a8a8a"/></svg>
<svg class="abs" style="left:1162.8px;top:830.8px" width="11" height="12" viewBox="0 0 11 12"><path d="M3 11V1.2M0.8 3.4L3 1.2L5.2 3.4" fill="none" stroke="#c8c8c8" stroke-width="1.1"/><path d="M8 1V10.8M5.8 8.6L8 10.8L10.2 8.6" fill="none" stroke="#c8c8c8" stroke-width="1.1"/></svg>
<div class="t" style="left:126px;top:879px;font-size:12.7px;color:#50555b;font-weight:400;">validity.com</div>
<div class="abs" style="left:372px;top:869.1px;width:7.9px;height:15.5px;background:#12b97b"></div><div class="abs" style="left:380.92px;top:869.1px;width:7.9px;height:15.5px;background:#12b97b"></div><div class="abs" style="left:389.84px;top:869.1px;width:7.9px;height:15.5px;background:#12b97b"></div><div class="abs" style="left:398.76px;top:869.1px;width:7.9px;height:15.5px;background:#12b97b"></div><div class="abs" style="left:407.68px;top:869.1px;width:7.9px;height:15.5px;background:#12b97b"></div><div class="abs" style="left:416.6px;top:869.1px;width:7.9px;height:15.5px;background:#12b97b"></div><div class="abs" style="left:425.52px;top:869.1px;width:7.9px;height:15.5px;background:#12b97b"></div><div class="abs" style="left:434.44px;top:869.1px;width:7.9px;height:15.5px;background:#12b97b"></div><div class="abs" style="left:443.36px;top:869.1px;width:7.9px;height:15.5px;background:#12b97b"></div><div class="abs" style="left:452.28px;top:869.1px;width:7.9px;height:15.5px;background:#12b97b"></div><div class="abs" style="left:461.2px;top:869.1px;width:7.9px;height:15.5px;background:#12b97b"></div><div class="abs" style="left:470.12px;top:869.1px;width:7.9px;height:15.5px;background:#12b97b"></div><div class="abs" style="left:479.04px;top:869.1px;width:7.9px;height:15.5px;background:#12b97b"></div><div class="abs" style="left:487.96px;top:869.1px;width:7.9px;height:15.5px;background:#12b97b"></div><div class="abs" style="left:496.88px;top:869.1px;width:7.9px;height:15.5px;background:#12b97b"></div><div class="abs" style="left:505.8px;top:869.1px;width:7.9px;height:15.5px;background:#12b97b"></div><div class="abs" style="left:514.72px;top:869.1px;width:7.9px;height:15.5px;background:#12b97b"></div><div class="abs" style="left:523.64px;top:869.1px;width:7.9px;height:15.5px;background:#12b97b"></div><div class="abs" style="left:532.56px;top:869.1px;width:7.9px;height:15.5px;background:#12b97b"></div><div class="abs" style="left:541.48px;top:869.1px;width:7.9px;height:15.5px;background:#12b97b"></div><div class="abs" style="left:550.4px;top:869.1px;width:7.9px;height:15.5px;background:#12b97b"></div><div class="abs" style="left:559.32px;top:869.1px;width:7.9px;height:15.5px;background:#12b97b"></div><div class="abs" style="left:568.24px;top:869.1px;width:7.9px;height:15.5px;background:#12b97b"></div><div class="abs" style="left:577.16px;top:869.1px;width:7.9px;height:15.5px;background:#12b97b"></div><div class="abs" style="left:586.08px;top:869.1px;width:7.9px;height:15.5px;background:#12b97b"></div><div class="abs" style="left:595px;top:869.1px;width:7.9px;height:15.5px;background:#12b97b"></div><div class="abs" style="left:603.92px;top:869.1px;width:7.9px;height:15.5px;background:#12b97b"></div><div class="abs" style="left:612.84px;top:869.1px;width:7.9px;height:15.5px;background:#12b97b"></div><div class="abs" style="left:621.76px;top:869.1px;width:7.9px;height:15.5px;background:#e9e9e9"></div><div class="abs" style="left:630.68px;top:869.1px;width:7.9px;height:15.5px;background:#e9e9e9"></div>
<div class="t c" style="left:706.8px;top:879px;font-size:12.4px;color:#50555b;font-weight:400;">N/A</div>
<div class="t c" style="left:819.4px;top:879px;font-size:12px;color:#50555b;font-weight:400;">100%</div>
<div class="t c" style="left:932.5px;top:879px;font-size:12px;color:#50555b;font-weight:400;">100%</div>
<div class="t c" style="left:1085.1px;top:879px;font-size:12px;color:#50555b;font-weight:400;">0</div>
<div class="abs" style="left:1191px;top:870.4px;width:18.7px;height:18.7px;box-sizing:border-box;border:1px solid #dedede;border-radius:3px;background:#fff"></div>
<svg class="abs" style="left:1194.5px;top:875.5px" width="12" height="9" viewBox="0 0 12 9"><path d="M0.5 4.5H11M7 1L11 4.5L7 8" fill="none" stroke="#333" stroke-width="1.3"/></svg>
<div class="abs" style="left:102px;top:900px;width:1133px;height:1px;background:#e2e2e2"></div>
<div class="abs" style="left:78px;top:868px;width:1182px;height:32.5px;background:linear-gradient(to bottom, rgba(0,0,0,0), rgba(0,0,0,0.07))"></div>
</body></html>
